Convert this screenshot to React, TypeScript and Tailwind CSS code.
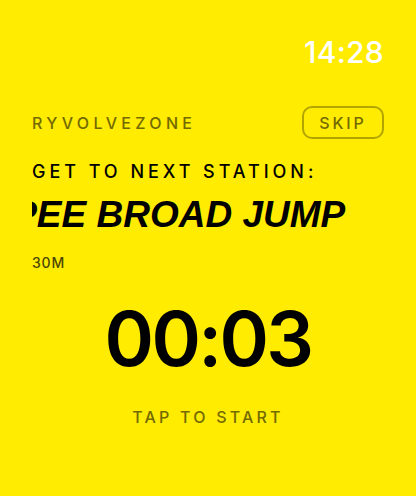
export default function App() {
  const inter = { fontFamily: 'Inter, "Liberation Sans", sans-serif' }
  return (
    <div className="w-[416px] h-[496px] bg-[#ffec00] px-8 overflow-hidden" style={inter}>
      {/* status bar */}
      <div className="flex justify-end pt-[37px]">
        <span className="text-[30px] leading-none font-medium tracking-[0.01em] text-white">14:28</span>
      </div>

      {/* header */}
      <div className="flex items-center justify-between mt-[39px] h-[33px]">
        <span className="text-[16px] leading-none font-medium tracking-[0.27em] text-[#736a00]">RYVOLVEZONE</span>
        <button className="h-[33px] w-[82px] rounded-[10px] border-2 border-[#b2a500] text-[16px] leading-none font-medium tracking-[0.18em] text-[#736a00]">
          SKIP
        </button>
      </div>

      <div className="mt-[24px] text-[18px] leading-none font-medium tracking-[0.22em] text-black">GET TO NEXT STATION:</div>

      <div className="mt-[15px] overflow-hidden">
        <div
          className="whitespace-nowrap -translate-x-[100px] text-[37px] leading-none font-bold italic text-black"
          style={{ fontFamily: '"Liberation Sans", Arial, sans-serif' }}
        >
          BURPEE BROAD JUMP
        </div>
      </div>

      <div className="mt-[23px] text-[14px] leading-none font-medium tracking-[0.06em] text-[#4d4600]">30M</div>

      <div className="mt-[31px] text-center text-[75px] leading-none font-semibold tracking-[-0.035em] text-black">
        00:03
      </div>

      <div className="mt-[33px] text-center text-[16px] leading-none font-medium tracking-[0.2em] text-[#736a00]">TAP TO START</div>
    </div>
  )
}
